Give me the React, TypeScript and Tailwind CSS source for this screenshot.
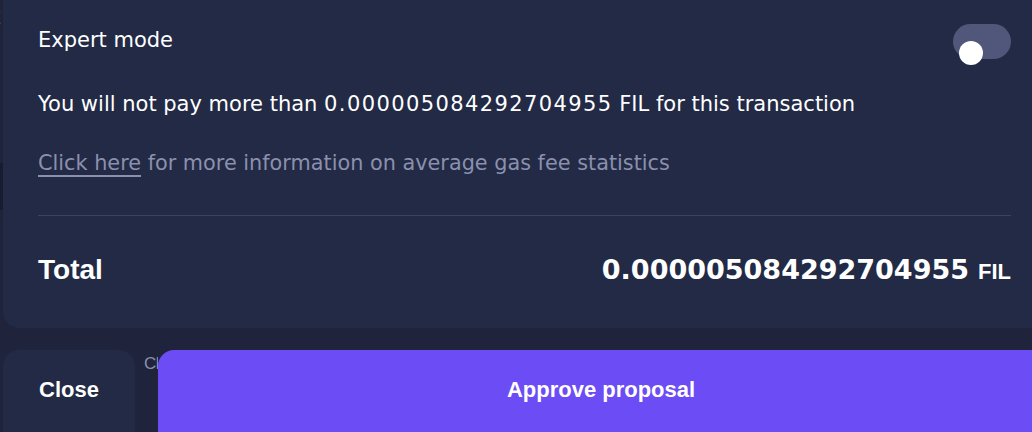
import React from 'react';

const amount = '0.000005084292704955';

function Toggle() {
  return (
    <div className="relative mt-[2px] h-[35px] w-[58px] shrink-0 rounded-full bg-[#50577a]">
      <span className="absolute left-[6px] top-[17px] h-[24px] w-[24px] rounded-full bg-white" />
    </div>
  );
}

export default function App() {
  return (
    <div className="flex h-[432px] w-[1032px] overflow-hidden bg-[#1f233b] font-['DejaVu_Sans',sans-serif] text-white">
      <div className="flex w-[3px] shrink-0 flex-col overflow-hidden">
        <span className="mt-[10px] -ml-[9px] text-[16px] leading-[18px] text-[#8b90ad]">E</span>
        <span className="mt-[135px] h-[47px] w-[3px] bg-[#181c30]" />
      </div>

      <div className="flex min-w-0 flex-1 flex-col">
        <section className="rounded-bl-[16px] bg-[#222a45] pb-[40px] pl-[35px] pr-[21px] pt-[22px]">
          <div className="flex h-[36px] items-start justify-between">
            <span className="text-[21px] leading-[36px]">Expert mode</span>
            <Toggle />
          </div>

          <p className="mt-[32px] h-[28px] whitespace-nowrap text-[21px] leading-[28px]">
            You will not pay more than <span className="tracking-[1.4px]">{amount}</span> FIL for this
            transaction
          </p>

          <p className="mt-[31px] h-[28px] whitespace-nowrap text-[20.8px] leading-[28px] text-[#8b90ad]">
            <a className="underline decoration-[1.5px] underline-offset-[5px]">Click here</a> for more
            information on average gas fee statistics
          </p>

          <div className="mt-[38px] h-px bg-[#3b4263]" />

          <div className="mt-[36px] flex h-[36px] items-center justify-between font-bold leading-[36px]">
            <span className="font-['Liberation_Sans',sans-serif] text-[28px]">Total</span>
            <span className="flex h-[36px] items-baseline gap-[9px]">
              <span className="text-[27px]">{amount}</span>
              <span className="font-['Liberation_Sans',sans-serif] text-[22px]">FIL</span>
            </span>
          </div>
        </section>

        <div className="mt-[22px] flex font-['Liberation_Sans',sans-serif] font-bold">
          <button className="flex h-[100px] w-[132px] shrink-0 justify-center rounded-[16px] bg-[#232a45] pt-[26px] text-[22px] leading-[28px]">
            Close
          </button>
          <div className="ml-[9px] w-[14px] shrink-0 overflow-hidden whitespace-nowrap pt-[2px] font-['Liberation_Sans',sans-serif] text-[17px] font-normal leading-[24px] tracking-[-0.5px] text-[#8b90ad]">
            Close
          </div>
          <button className="-mr-[12px] flex h-[100px] flex-1 justify-center rounded-tl-[16px] bg-[#6c4cf4] pt-[26px] text-[22px] leading-[28px]">
            Approve proposal
          </button>
        </div>
      </div>
    </div>
  );
}
